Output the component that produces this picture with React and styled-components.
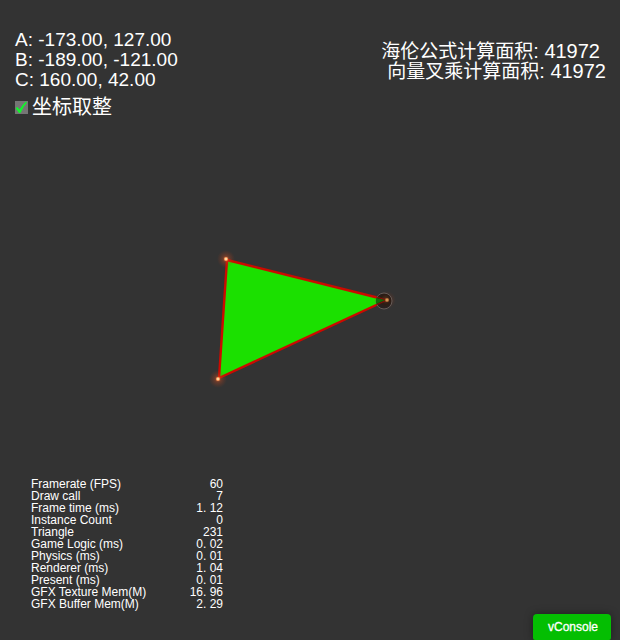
import React, { useState } from "react";
import styled, { createGlobalStyle } from "styled-components";

const GlobalStyle = createGlobalStyle`
  * { box-sizing: border-box; }
  body {
    margin: 0;
    background: #333333;
    color: #ffffff;
    font-family: "Liberation Sans", "Noto Sans CJK SC", sans-serif;
  }
`;

const Page = styled.main`
  display: flex;
  flex-direction: column;
  min-height: 100vh;
  overflow: hidden;
`;

const TopBar = styled.header`
  display: flex;
  justify-content: space-between;
  align-items: flex-start;
  padding: 30px 14px 0 15px;
`;

const Coordinates = styled.div`
  display: flex;
  flex-direction: column;
  font-size: 19px;
`;

const Coordinate = styled.div`
  line-height: 20px;
  white-space: nowrap;
`;

const RoundToggle = styled.label`
  display: flex;
  align-items: center;
  gap: 4px;
  margin-top: 5px;
  font-size: 20px;
  line-height: 24px;
`;

const ToggleBox = styled.span`
  display: grid;
  width: 13px;
  height: 13px;
  background: #757575;

  & > * {
    grid-area: 1 / 1;
  }
`;

const ToggleInput = styled.input`
  appearance: none;
  width: 100%;
  height: 100%;
  margin: 0;
`;

const Tick = styled.svg`
  width: 13px;
  height: 13px;
  pointer-events: none;
`;

const Areas = styled.div`
  display: flex;
  flex-direction: column;
  padding-top: 11px;
`;

const Area = styled.div`
  height: 20px;
  line-height: 20px;
  font-size: 20px;
  white-space: nowrap;
  padding-left: ${(p) => p.$indent}px;
  padding-right: ${(p) => 6 - p.$indent}px;
`;

const AreaName = styled.span`
  font-size: 19px;
`;

const Stage = styled.section`
  display: flex;
  flex: 1;
  align-items: center;
  justify-content: center;
  padding-top: 24px;
`;

const Scene = styled.svg`
  width: 220px;
  height: 180px;
`;

const StatsTable = styled.table`
  width: 192px;
  margin-left: 31px;
  border-collapse: collapse;
  font-size: 12px;
  line-height: 12px;
`;

const StatName = styled.th`
  height: 12px;
  padding: 0;
  font-weight: 400;
  text-align: left;
  white-space: nowrap;
`;

const StatValue = styled.td`
  height: 12px;
  padding: 0;
  text-align: right;
  white-space: pre;
`;

const BottomBar = styled.footer`
  display: flex;
  justify-content: flex-end;
  padding: 4px 9px 0 0;
`;

const ConsoleButton = styled.button`
  height: 26px;
  padding: 0 13px 0 15px;
  border: 0;
  border-radius: 4px 4px 2px 2px;
  background: #04be02;
  box-shadow: 0 0 8px rgba(0, 0, 0, 0.4);
  color: #ffffff;
  font: 12px/26px "Liberation Sans", sans-serif;
  -webkit-text-stroke: 0.3px #ffffff;
  cursor: pointer;
`;

const points = [
  { name: "A", x: -173, y: 127 },
  { name: "B", x: -189, y: -121 },
  { name: "C", x: 160, y: 42 },
];

const areas = [
  { name: "海伦公式计算面积", value: 41972, indent: 0 },
  { name: "向量叉乘计算面积", value: 41972, indent: 6 },
];

const stats = [
  ["Framerate (FPS)", "60"],
  ["Draw call", "7"],
  ["Frame time (ms)", "1. 12"],
  ["Instance Count", "0"],
  ["Triangle", "231"],
  ["Game Logic (ms)", "0. 02"],
  ["Physics (ms)", "0. 01"],
  ["Renderer (ms)", "1. 04"],
  ["Present (ms)", "0. 01"],
  ["GFX Texture Mem(M)", "16. 96"],
  ["GFX Buffer Mem(M)", "2. 29"],
];

function Spark({ x, y }) {
  return (
    <g>
      <circle cx={x} cy={y} r="9" fill="url(#glow)" />
      <circle cx={x} cy={y} r="2" fill="#ffa060" />
      <circle cx={x} cy={y} r="1.1" fill="#ffe8b0" />
    </g>
  );
}

function Triangle() {
  return (
    <Scene viewBox="-110 -100 220 180" role="img" aria-label="ABC">
      <defs>
        <radialGradient id="glow">
          <stop offset="0" stopColor="#ff7030" stopOpacity="0.75" />
          <stop offset="0.4" stopColor="#c04820" stopOpacity="0.35" />
          <stop offset="1" stopColor="#a03818" stopOpacity="0" />
        </radialGradient>
        <radialGradient id="orb" cx="0.6" cy="0.4">
          <stop offset="0" stopColor="#50341c" stopOpacity="0.9" />
          <stop offset="0.6" stopColor="#28180f" stopOpacity="0.85" />
          <stop offset="1" stopColor="#241c1a" stopOpacity="0.8" />
        </radialGradient>
      </defs>
      <path d="M-83 -61 L77 -21 L-91 57 Z" fill="#1be000" stroke="#cc0a00" strokeWidth="2.4" strokeLinejoin="round" />
      <Spark x={-84} y={-62} />
      <Spark x={-92} y={58} />
      <circle cx="77" cy="-21" r="9" fill="url(#glow)" opacity="0.6" />
      <circle cx="74" cy="-20" r="8" fill="url(#orb)" stroke="#665b57" strokeWidth="1" />
      <path d="M66 -23 L75 -21 L66 -17 Z" fill="#126c08" />
      <path d="M66 -24 L77 -21 L66 -16" fill="none" stroke="#861208" strokeWidth="1" />
      <circle cx="77" cy="-21" r="2" fill="#b86f38" />
      <circle cx="77" cy="-21" r="1" fill="#d6a463" />
    </Scene>
  );
}

export default function App() {
  const [rounded, setRounded] = useState(true);

  return (
    <>
      <GlobalStyle />
      <Page>
        <TopBar>
          <Coordinates>
            {points.map((p) => (
              <Coordinate key={p.name}>
                {p.name}: {p.x.toFixed(2)}, {p.y.toFixed(2)}
              </Coordinate>
            ))}
            <RoundToggle>
              <ToggleBox>
                <ToggleInput
                  type="checkbox"
                  checked={rounded}
                  onChange={(e) => setRounded(e.target.checked)}
                />
                {rounded && (
                  <Tick viewBox="0 0 13 13" aria-hidden="true">
                    <path d="M0.5 7 L2.5 6 L4.5 8.5 Q7 4 11 0.5 L12 1.5 Q8 6 5.5 12 L4 12 Z" fill="#12f52c" />
                  </Tick>
                )}
              </ToggleBox>
              坐标取整
            </RoundToggle>
          </Coordinates>
          <Areas>
            {areas.map((a) => (
              <Area key={a.name} $indent={a.indent}>
                <AreaName>{a.name}</AreaName>: {a.value}
              </Area>
            ))}
          </Areas>
        </TopBar>
        <Stage>
          <Triangle />
        </Stage>
        <StatsTable>
          <tbody>
            {stats.map(([name, value]) => (
              <tr key={name}>
                <StatName scope="row">{name}</StatName>
                <StatValue>{value}</StatValue>
              </tr>
            ))}
          </tbody>
        </StatsTable>
        <BottomBar>
          <ConsoleButton type="button">vConsole</ConsoleButton>
        </BottomBar>
      </Page>
    </>
  );
}
